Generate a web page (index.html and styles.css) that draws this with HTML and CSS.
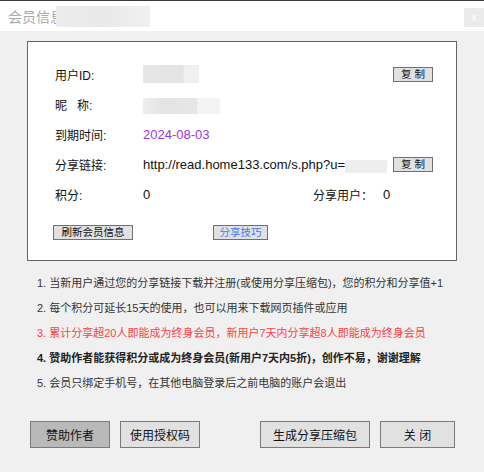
FILE: index.html
```html
<!DOCTYPE html>
<html lang="zh-CN">
<head>
<meta charset="utf-8">
<title>会员信息</title>
<link rel="stylesheet" href="styles.css">
</head>
<body>
<header class="titlebar">
  <span class="title">会员信息</span>
  <span class="blur title-blur"></span>
  <span class="close">x</span>
</header>
<main class="content">
  <section class="panel">
    <div class="row">
      <span class="label">用户ID:</span>
      <span class="value"><span class="blur b-id"></span></span>
      <button class="mini">复 制</button>
    </div>
    <div class="row">
      <span class="label">昵&nbsp;&nbsp;&nbsp;称:</span>
      <span class="value"><span class="blur b-nick"></span></span>
    </div>
    <div class="row">
      <span class="label">到期时间:</span>
      <span class="value latin date">2024-08-03</span>
    </div>
    <div class="row">
      <span class="label">分享链接:</span>
      <span class="value latin link">http://read.home133.com/s.php?u=<span class="blur b-url"></span></span>
      <button class="mini">复 制</button>
    </div>
    <div class="row stats">
      <span class="label">积分:</span>
      <span class="value latin">0</span>
      <span class="label share-label">分享用户：</span>
      <span class="value latin">0</span>
    </div>
    <div class="panel-actions">
      <button class="mini wide">刷新会员信息</button>
      <button class="mini tips">分享技巧</button>
    </div>
  </section>
  <ol class="notes">
    <li>1. 当新用户通过您的分享链接下载并注册(或使用分享压缩包)，您的积分和分享值+1</li>
    <li>2. 每个积分可延长15天的使用，也可以用来下载网页插件或应用</li>
    <li class="red">3. 累计分享超20人即能成为终身会员，新用户7天内分享超8人即能成为终身会员</li>
    <li class="bold">4. 赞助作者能获得积分或成为终身会员(新用户7天内5折)，创作不易，谢谢理解</li>
    <li>5. 会员只绑定手机号，在其他电脑登录后之前电脑的账户会退出</li>
  </ol>
  <div class="actions">
    <button class="btn pressed">赞助作者</button>
    <button class="btn">使用授权码</button>
    <button class="btn gen">生成分享压缩包</button>
    <button class="btn close-btn">关 闭</button>
  </div>
</main>
</body>
</html>
```
FILE: styles.css
```css
* { box-sizing: border-box; }
html, body { margin: 0; padding: 0; }
body {
  width: 484px;
  height: 472px;
  background: #f0f0f0;
  font-family: "Liberation Sans", "Noto Sans CJK SC", sans-serif;
  color: #111;
  overflow: hidden;
}
.titlebar {
  height: 31px;
  border-top: 1px solid #3a3a3a;
  background: #fff;
  display: flex;
  align-items: center;
  position: relative;
}
.title {
  margin-left: 8px;
  font-size: 14px;
  color: #a8a8a8;
}
.blur { display: inline-block; }
.title-blur {
  width: 94px;
  height: 21px;
  margin-left: -8px;
  background: linear-gradient(90deg, #ececec 0, #e9e9e9 50%, #f1f1f1 100%);
}
.close {
  position: absolute;
  right: 0;
  top: 7px;
  width: 20px;
  height: 19px;
  background: #ebebeb;
  color: #fff;
  font-size: 11px;
  text-align: center;
  line-height: 18px;
}
.content { padding-top: 10px; }
.panel {
  margin-left: 27px;
  width: 430px;
  height: 220px;
  background: #fff;
  border: 1px solid #646464;
  padding: 17px 23px 0 27px;
}
.row {
  display: grid;
  grid-template-columns: 88px 1fr auto;
  align-items: center;
  height: 30px;
  font-size: 12px;
}
.label { color: #111; }
.value { color: #111; display: flex; align-items: center; }
.latin { font-size: 13px; }
.date { color: #9b35e6; }
.link { white-space: nowrap; }
.b-id {
  width: 56px;
  height: 18px;
  background: linear-gradient(90deg, #e6e6e6 0, #e4e4e4 72%, #f0f0f0 73%);
}
.b-nick {
  width: 77px;
  height: 16px;
  margin-top: 4px;
  background: linear-gradient(90deg, #eeeeee 0, #e4e4e4 25%, #e6e6e6 70%, #f3f3f3 71%);
}
.b-url {
  width: 42px;
  height: 13px;
  margin-top: 4px;
  background: #eeeeee;
}
.stats { grid-template-columns: 88px 170px 70px auto; }
.mini {
  font-family: inherit;
  font-size: 10.5px;
  color: #111;
  background: #e1e1e1;
  border: 1px solid #707070;
  border-radius: 0;
  padding: 0;
  height: 15px;
  width: 40px;
  line-height: 13px;
  margin: 0;
}
.panel-actions {
  display: flex;
  gap: 80px;
  margin-top: 16px;
  margin-left: -2px;
}
.mini.wide { width: 80px; }
.mini.tips { width: 55px; color: #3f7cf2; }
.notes {
  list-style: none;
  margin: 10px 0 0 0;
  padding: 0 0 0 37px;
  font-size: 11px;
  line-height: 25px;
  color: #333;
}
.notes li { white-space: nowrap; }
.notes .red { color: #ff4242; }
.notes .bold { font-weight: bold; color: #222; }
.actions {
  display: flex;
  margin-top: 25px;
  padding-left: 30px;
  gap: 10px;
}
.btn {
  font-family: inherit;
  font-size: 12px;
  color: #111;
  height: 27px;
  width: 80px;
  background: #e1e1e1;
  border: 1px solid #7a7a7a;
  border-radius: 0;
  padding: 0;
  margin: 0;
}
.btn.pressed { background: #b9b9b9; }
.btn.gen { width: 110px; margin-left: 50px; }
.btn.close-btn { width: 75px; }
```
